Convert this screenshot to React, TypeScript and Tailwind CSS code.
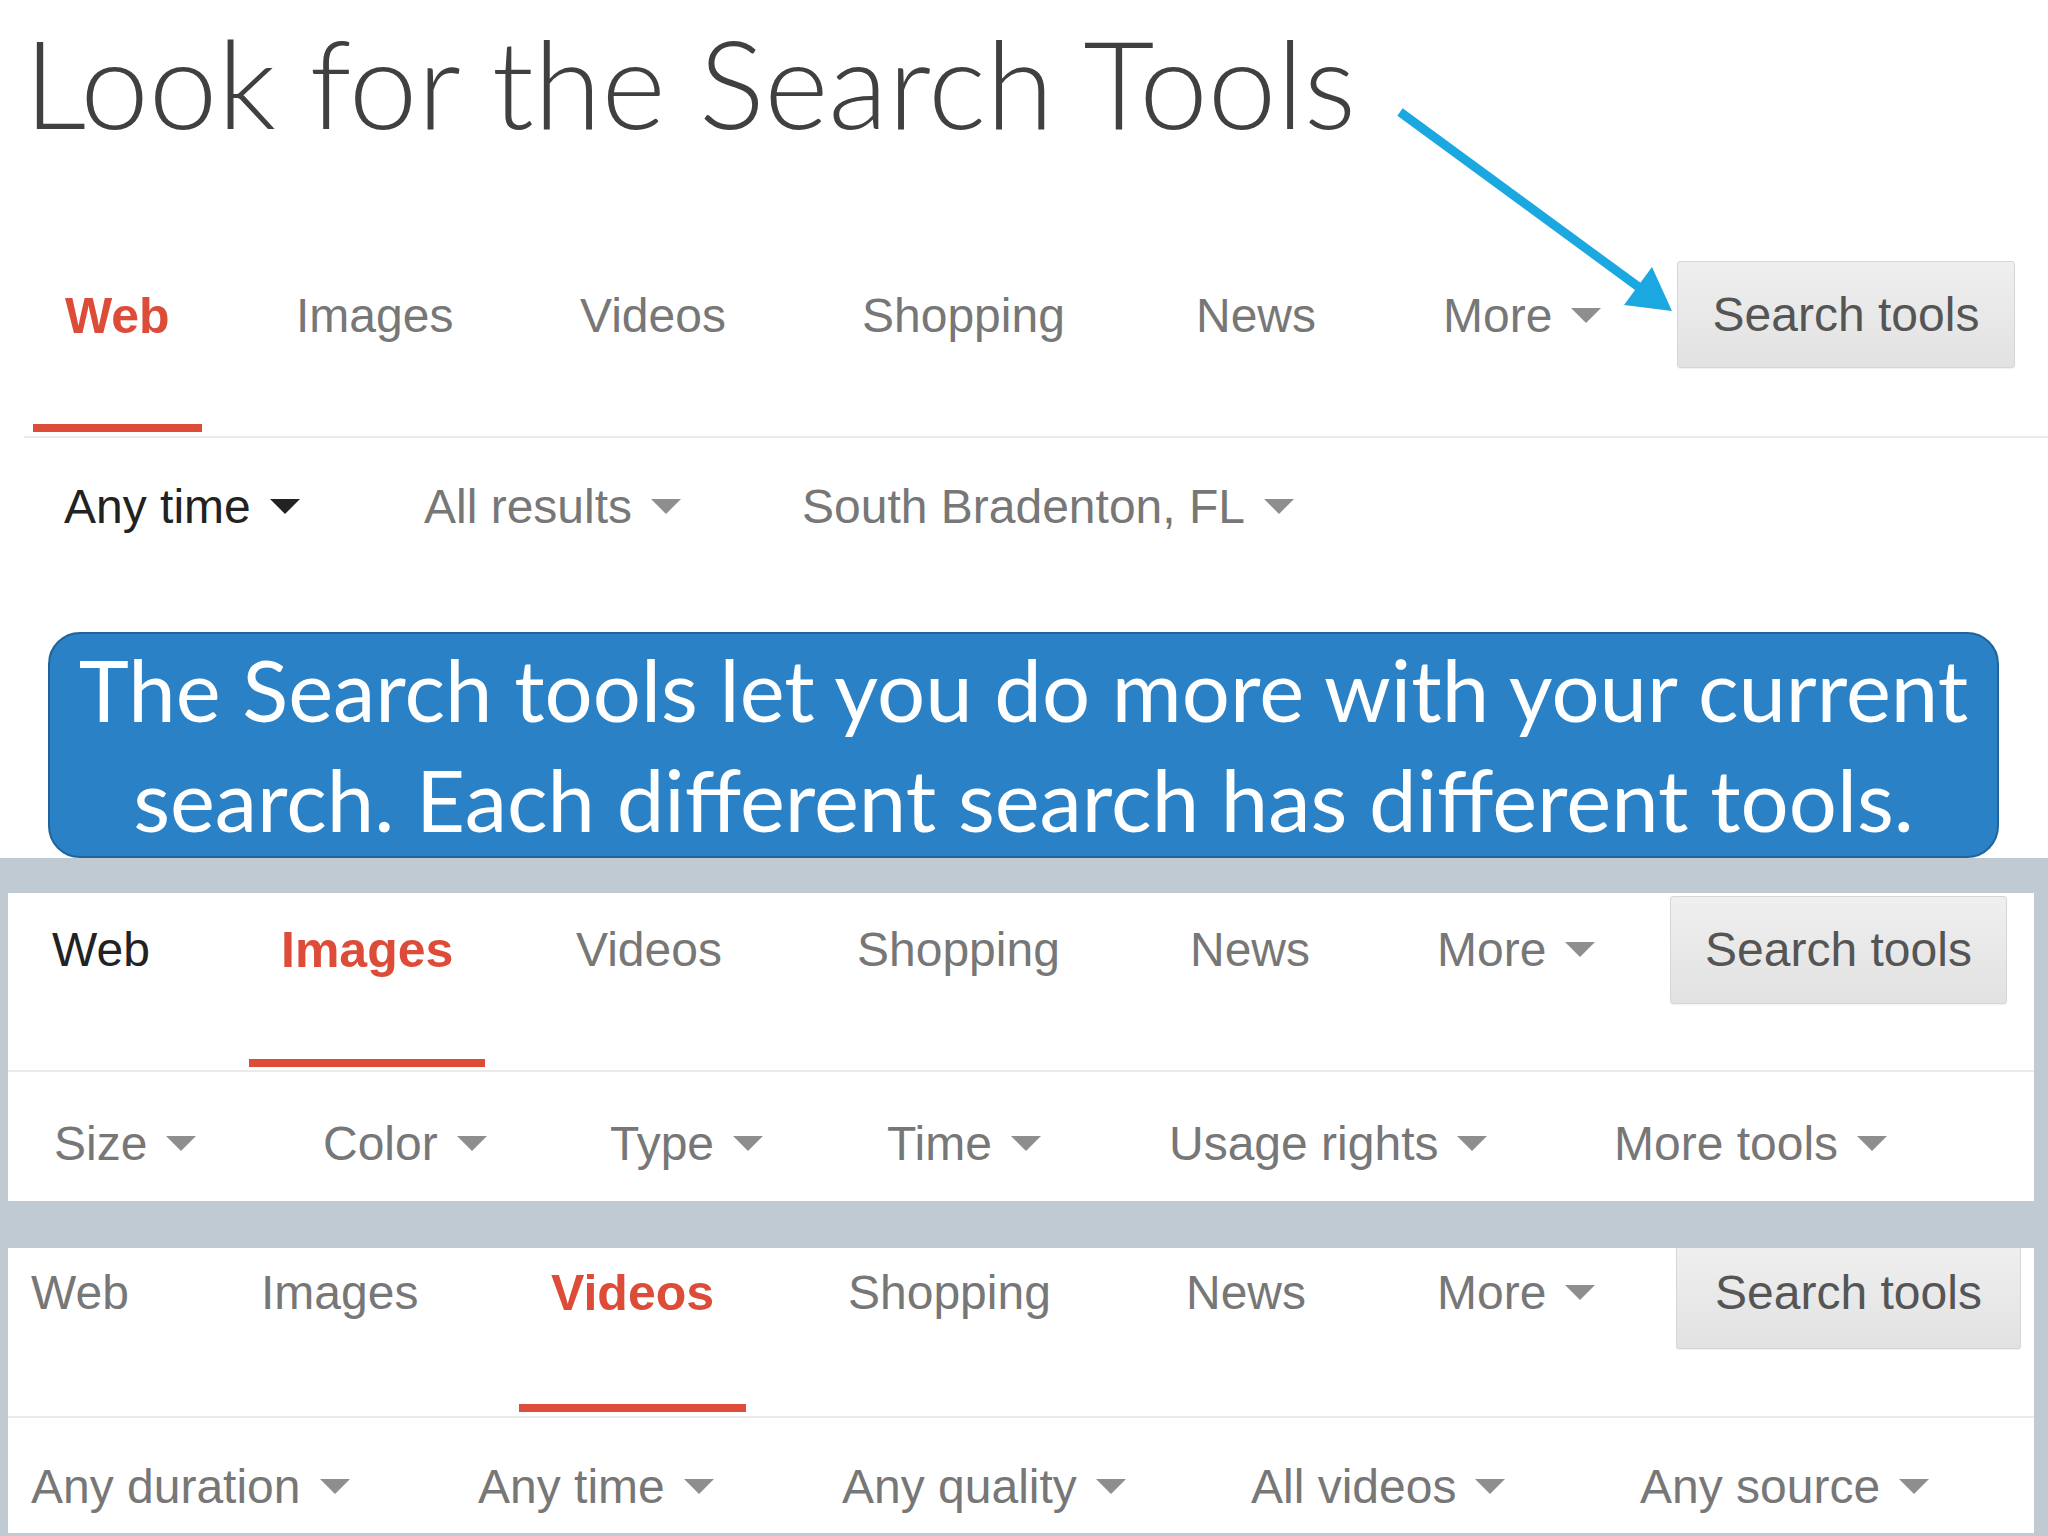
import React from 'react';

type TabState = 'active' | 'dark' | 'gray';
type Tab = { label: string; w: string; state: TabState; arrow?: boolean };
type Tool = { label: string; w: string; dark?: boolean };

function Caret({ dark }: { dark?: boolean }) {
  return (
    <span
      className={`ml-[19px] h-0 w-0 border-l-[15px] border-r-[15px] border-t-[15px] border-l-transparent border-r-transparent ${
        dark ? 'border-t-[#222222]' : 'border-t-[#8e8e8e]'
      }`}
    />
  );
}

function TabItem({ tab, textPt }: { tab: Tab; textPt: string }) {
  const color =
    tab.state === 'active'
      ? 'font-bold text-[50px] text-[#dd4b39]'
      : tab.state === 'dark'
      ? 'text-[#222222]'
      : 'text-[#777777]';
  return (
    <div className={`h-full shrink-0 ${tab.w}`}>
      <div className="inline-flex h-full flex-col">
        <div className={`flex h-[49px] items-center whitespace-nowrap ${textPt} box-content ${color}`}>
          <span>{tab.label}</span>
          {tab.arrow && <Caret />}
        </div>
        {tab.state === 'active' && <div className="-mx-[32px] mt-auto h-[8px] bg-[#dd4b39]" />}
      </div>
    </div>
  );
}

function ToolItem({ tool }: { tool: Tool }) {
  return (
    <div className={`flex h-[49px] shrink-0 items-center whitespace-nowrap ${tool.w} ${tool.dark ? 'text-[#222222]' : 'text-[#777777]'}`}>
      <span>{tool.label}</span>
      <Caret dark={tool.dark} />
    </div>
  );
}

function SearchTools({ cls }: { cls: string }) {
  return (
    <div
      className={`flex shrink-0 justify-center self-start border-[#d6d6d6] bg-linear-to-b from-[#efefef] to-[#e2e2e2] whitespace-nowrap text-[#555555] shadow-[0_1px_1px_rgba(0,0,0,0.06)] ${cls}`}
    >
      <span className="flex h-[49px] items-center">Search tools</span>
    </div>
  );
}

type PanelProps = {
  outer: string;
  tabRow: string;
  textPt: string;
  tabs: Tab[];
  button: string;
  divider: string;
  toolRow: string;
  tools: Tool[];
};

function GooglePanel(p: PanelProps) {
  return (
    <div className={`flex flex-col font-['Liberation_Sans',Arial,sans-serif] text-[48px] leading-none ${p.outer}`}>
      <div className={`flex shrink-0 ${p.tabRow}`}>
        {p.tabs.map((t) => (
          <TabItem key={t.label} tab={t} textPt={p.textPt} />
        ))}
        <SearchTools cls={p.button} />
      </div>
      <div className={`shrink-0 bg-[#ebebeb] ${p.divider}`} />
      <div className={`flex ${p.toolRow}`}>
        {p.tools.map((t) => (
          <ToolItem key={t.label} tool={t} />
        ))}
      </div>
    </div>
  );
}

export default function App() {
  return (
    <div className="relative h-[1536px] w-[2048px] overflow-hidden bg-white">
      {/* Title */}
      <div className="h-[240px] pl-[24px] pt-[20px]">
        <span className="font-['Lato','Open_Sans',sans-serif] text-[123px] font-light leading-none whitespace-nowrap text-[#404040]">
          Look for the Search Tools
        </span>
      </div>

      {/* Panel 1 */}
      <GooglePanel
        outer="ml-[24px] h-[392px]"
        tabRow="h-[192px] pl-[41px]"
        textPt="pt-[51px]"
        tabs={[
          { label: 'Web', w: 'w-[231px]', state: 'active' },
          { label: 'Images', w: 'w-[284px]', state: 'gray' },
          { label: 'Videos', w: 'w-[282px]', state: 'gray' },
          { label: 'Shopping', w: 'w-[334px]', state: 'gray' },
          { label: 'News', w: 'w-[247px]', state: 'gray' },
          { label: 'More', w: 'w-[234px]', state: 'gray', arrow: true },
        ]}
        button="mt-[21px] h-[107px] w-[338px] rounded-[3px] border pt-[28px]"
        divider="mt-[4px] h-[2px]"
        toolRow="pl-[40px] pt-[44px]"
        tools={[
          { label: 'Any time', w: 'w-[360px]', dark: true },
          { label: 'All results', w: 'w-[378px]' },
          { label: 'South Bradenton, FL', w: 'w-auto' },
        ]}
      />

      {/* Callout */}
      <div className="ml-[48px] flex h-[226px] w-[1951px] flex-col items-center rounded-[32px] border-2 border-[#21639a] bg-[#2a81c5] font-['Lato','Open_Sans',sans-serif] text-[85px] leading-[110px] text-white">
        <div className="whitespace-nowrap">The Search tools let you do more with your current</div>
        <div className="whitespace-nowrap">search. Each different search has different tools.</div>
      </div>

      {/* Framed screenshots */}
      <div className="flex flex-col gap-[47px] bg-[#bfcad3] pb-[3px] pl-[8px] pr-[14px] pt-[35px]">
        <GooglePanel
          outer="h-[308px] bg-white"
          tabRow="h-[174px] pl-[44px]"
          textPt="pt-[32px]"
          tabs={[
            { label: 'Web', w: 'w-[229px]', state: 'dark' },
            { label: 'Images', w: 'w-[295px]', state: 'active' },
            { label: 'Videos', w: 'w-[281px]', state: 'gray' },
            { label: 'Shopping', w: 'w-[333px]', state: 'gray' },
            { label: 'News', w: 'w-[247px]', state: 'gray' },
            { label: 'More', w: 'w-[233px]', state: 'gray', arrow: true },
          ]}
          button="mt-[3px] h-[108px] w-[337px] rounded-[3px] border pt-[28px]"
          divider="mt-[3px] h-[2px]"
          toolRow="pl-[46px] pt-[47px]"
          tools={[
            { label: 'Size', w: 'w-[269px]' },
            { label: 'Color', w: 'w-[287px]' },
            { label: 'Type', w: 'w-[277px]' },
            { label: 'Time', w: 'w-[282px]' },
            { label: 'Usage rights', w: 'w-[445px]' },
            { label: 'More tools', w: 'w-auto' },
          ]}
        />
        <GooglePanel
          outer="h-[285px] bg-white"
          tabRow="h-[164px] pl-[23px]"
          textPt="pt-[20px]"
          tabs={[
            { label: 'Web', w: 'w-[230px]', state: 'gray' },
            { label: 'Images', w: 'w-[290px]', state: 'gray' },
            { label: 'Videos', w: 'w-[297px]', state: 'active' },
            { label: 'Shopping', w: 'w-[338px]', state: 'gray' },
            { label: 'News', w: 'w-[251px]', state: 'gray' },
            { label: 'More', w: 'w-[239px]', state: 'gray', arrow: true },
          ]}
          button="h-[101px] w-[345px] rounded-b-[3px] border border-t-0 pt-[20px]"
          divider="mt-[4px] h-[2px]"
          toolRow="pl-[23px] pt-[44px]"
          tools={[
            { label: 'Any duration', w: 'w-[447px]' },
            { label: 'Any time', w: 'w-[364px]' },
            { label: 'Any quality', w: 'w-[409px]' },
            { label: 'All videos', w: 'w-[389px]' },
            { label: 'Any source', w: 'w-auto' },
          ]}
        />
      </div>

      {/* Blue pointer arrow */}
      <svg
        className="pointer-events-none absolute left-0 top-0"
        width="2048"
        height="1536"
        viewBox="0 0 2048 1536"
      >
        <line x1="1400" y1="112" x2="1640" y2="288" stroke="#1ba7e0" strokeWidth="9" strokeLinecap="butt" />
        <polygon points="1672,311 1624,305 1652,267" fill="#1ba7e0" />
      </svg>
    </div>
  );
}
